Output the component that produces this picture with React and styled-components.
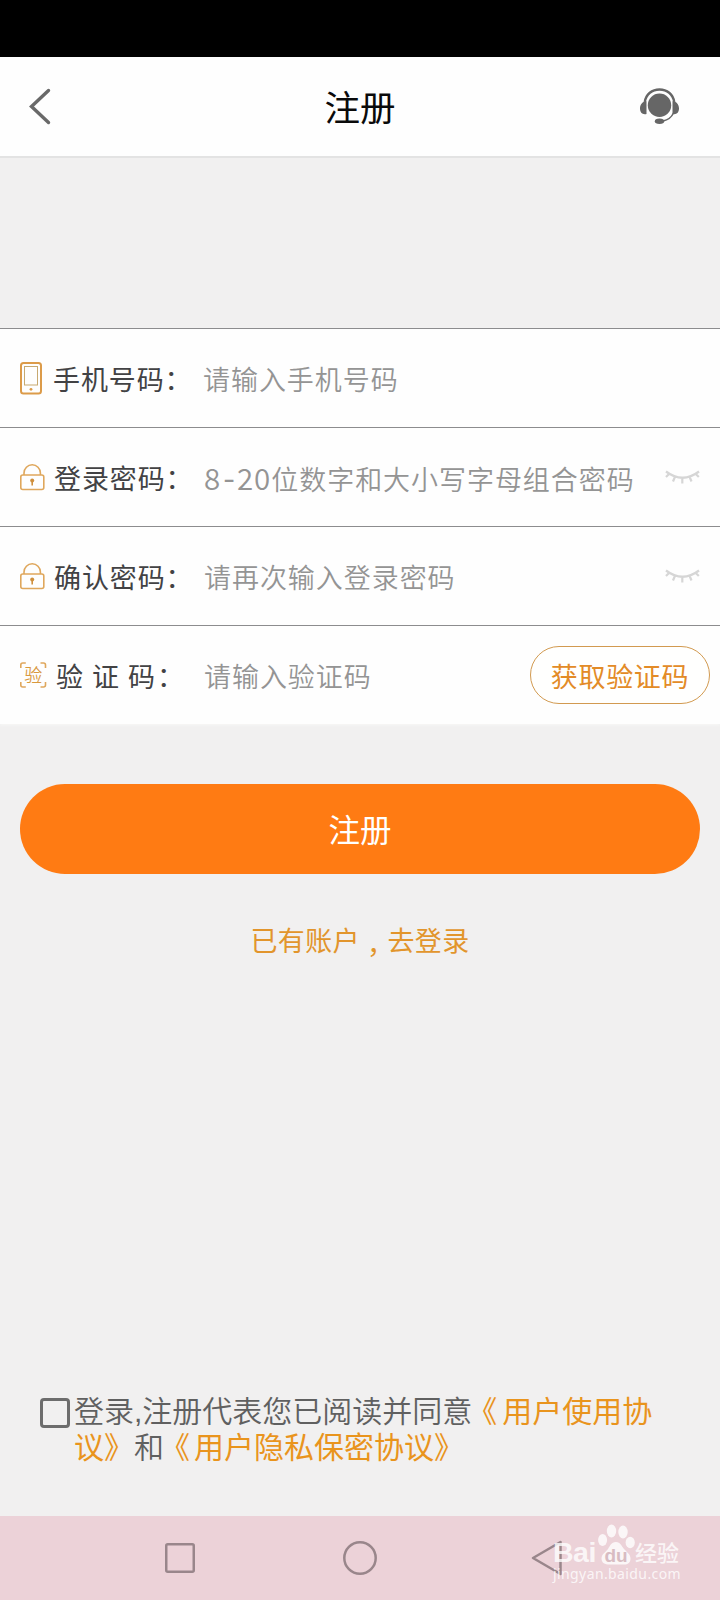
import React from "react";
import styled, { createGlobalStyle } from "styled-components";

const GlobalStyle = createGlobalStyle`
  *, *::before, *::after { box-sizing: border-box; }
  body {
    margin: 0;
    background: #f1f0f0;
    font-family: "Noto Sans CJK SC", "Noto Sans", sans-serif;
  }
`;

const Screen = styled.div`
  position: relative;
  display: flex;
  flex-direction: column;
  width: 720px;
  height: 1600px;
  overflow: hidden;
  background: #f1f0f0;
`;

const StatusBar = styled.div`
  flex: none;
  height: 57px;
  background: #000;
`;

const Header = styled.header`
  flex: none;
  display: grid;
  grid-template-columns: 80px 1fr 80px;
  align-items: center;
  height: 101px;
  border-bottom: 2px solid #e3e3e3;
  background: #fefefe;
`;

const BackButton = styled.div`
  display: flex;
  padding-left: 28px;
`;

const SupportButton = styled.div`
  display: flex;
`;

const Title = styled.h1`
  margin: 0;
  color: #0a0a0a;
  font-size: 35.5px;
  font-weight: 400;
  line-height: 50px;
  text-align: center;
  padding-bottom: 1px;
`;

const Form = styled.section`
  flex: none;
  display: flex;
  flex-direction: column;
  margin-top: 170px;
  background: #fefefe;
  box-shadow: 0 1px 3px #f8f8f7;
`;

const Row = styled.div`
  display: flex;
  align-items: center;
  height: 99px;
  padding: 0 10px 0 20px;
  border-top: 1px solid #8c8c8e;
`;

const IconSlot = styled.div`
  flex: none;
  display: flex;
  width: ${(p) => p.$width}px;
`;

const Label = styled.label`
  flex: none;
  width: ${(p) => p.$width}px;
  color: #424244;
  font-size: 27px;
  line-height: 40px;
  letter-spacing: ${(p) => p.$spacing || 0.9}px;
  white-space: nowrap;
  padding-top: 1px;
`;

const LastGlyph = styled.span`
  letter-spacing: 2px;
`;

const Hint = styled.div`
  flex: 1;
  display: flex;
  align-items: baseline;
  color: #949494;
  font-size: 27px;
  font-weight: 350;
  line-height: 40px;
  letter-spacing: 0.95px;
  white-space: nowrap;
  padding-top: 1px;
`;

const Digits = styled.span`
  display: flex;
  align-items: baseline;
  font-size: 29.5px;
  letter-spacing: 1px;
`;

const Dash = styled.span`
  padding: 0 1px 0 2px;
  font-size: 34px;
  line-height: 30px;
`;

const EyeSlot = styled.div`
  flex: none;
  display: flex;
  padding-right: 10px;
`;

const CodeButton = styled.button`
  flex: none;
  width: 180px;
  height: 58px;
  margin-bottom: 1px;
  padding: 2px 0 0;
  border: 1px solid #d29a50;
  border-radius: 29px;
  background: #fffffe;
  color: #e38b27;
  font-family: inherit;
  font-size: 27px;
  line-height: 40px;
  letter-spacing: 0.7px;
`;

const SubmitButton = styled.button`
  flex: none;
  height: 90px;
  margin: 60px 20px 0;
  padding: 0 0 2px;
  border: 0;
  border-radius: 45px;
  background: #ff7b13;
  color: #fff;
  font-family: inherit;
  font-size: 31.5px;
  line-height: 46px;
`;

const LoginLink = styled.a`
  flex: none;
  align-self: center;
  margin-top: 46px;
  color: #e2952c;
  font-size: 27px;
  line-height: 40px;
  letter-spacing: 0.4px;
`;

const LowComma = styled.span`
  position: relative;
  left: 7px;
  top: 3px;
`;

const Agreement = styled.div`
  flex: none;
  display: flex;
  align-items: flex-start;
  margin-top: auto;
  padding: 0 60px 51px 40px;
`;

const Checkbox = styled.span`
  flex: none;
  width: 30px;
  height: 30px;
  margin: 5px 4px 0 0;
  border: 3px solid #6d6d6d;
  border-radius: 4px;
`;

const AgreementText = styled.p`
  margin: 0;
  color: #606060;
  font-family: "Liberation Sans", "Noto Sans CJK SC", sans-serif;
  font-size: 30px;
  font-weight: 350;
  line-height: 35.5px;
  padding-top: 1px;
`;

const Terms = styled.span`
  color: #e9941d;
  font-weight: 400;
`;

const Kern = styled.span`
  letter-spacing: ${(p) => p.$by}px;
`;

const NavBar = styled.nav`
  flex: none;
  display: grid;
  grid-template-columns: repeat(3, 180px);
  justify-content: center;
  align-items: center;
  justify-items: center;
  height: 84px;
  background: #ecd2d8;
`;

const BackKey = styled.div`
  display: flex;
  padding-left: 14px;
`;

const Watermark = styled.div`
  position: absolute;
  left: 553px;
  top: 1521px;
  display: flex;
  flex-direction: column;
  color: rgba(255, 255, 255, 0.8);
`;

const Brand = styled.div`
  display: flex;
  align-items: flex-end;
  height: 44px;
`;

const BrandLatin = styled.span`
  width: 45px;
  font-family: "Liberation Sans", sans-serif;
  font-size: 28.5px;
  font-weight: 700;
  line-height: 25px;
  letter-spacing: -0.5px;
`;

const BrandHan = styled.span`
  margin-left: -1px;
  font-size: 22px;
  font-weight: 500;
  line-height: 28px;
`;

const BrandSite = styled.span`
  font-family: "Noto Sans", sans-serif;
  font-size: 14px;
  line-height: 18px;
  letter-spacing: 0.4px;
`;

const PhoneIcon = () => (
  <svg width="22" height="33" viewBox="0 0 22 33" fill="none" stroke="#dc9b49">
    <rect x="1" y="1" width="20" height="30.5" rx="2.5" strokeWidth="2" />
    <rect x="4.5" y="4.5" width="13" height="18.5" strokeWidth="1" stroke="#c7a970" />
    <circle cx="11" cy="27.3" r="1.4" fill="#dc9b49" stroke="none" />
  </svg>
);

const LockIcon = () => (
  <svg width="25" height="27" viewBox="0 0 25 27" fill="none" stroke="#dfa75c" strokeWidth="1.6">
    <rect x="0.8" y="11" width="23" height="14.5" rx="2" />
    <path d="M4 11V9a8.2 8.2 0 0 1 16.4 0v2" />
    <circle cx="12.2" cy="16.5" r="2" fill="#cf8f3d" stroke="none" />
    <path d="M12.2 16.5v5" stroke="#cf8f3d" />
  </svg>
);

const ScanIcon = () => (
  <svg width="27" height="27" viewBox="0 0 27 27" fill="none" stroke="#dfa75c" strokeWidth="1.6">
    <path d="M.8 6V3q0-2 2-2h3M20.5 1h3q2 0 2 2v3M25.5 20v3q0 2-2 2h-3M5.8 25h-3q-2 0-2-2v-3" />
    <text
      x="13.3"
      y="19.5"
      textAnchor="middle"
      fontFamily="Noto Sans CJK SC, sans-serif"
      fontSize="18"
      fontWeight="350"
      fill="#d9993e"
      stroke="none"
    >
      验
    </text>
  </svg>
);

const ClosedEyeIcon = () => (
  <svg width="35" height="17" viewBox="0 0 35 17" fill="none" stroke="#d6d6d6" strokeWidth="2.2">
    <path d="M1 2.5Q17.5 15 34 2.5M4 5L1 8M10 7.8L8 12.5M17.3 9v5.500M24.500 7.800l2 4.700M30.800 5l3 3" />
  </svg>
);

const HeadsetIcon = () => (
  <svg width="39" height="37" viewBox="0 0 39 37" fill="#666">
    <circle cx="19.5" cy="17.3" r="11.7" />
    <path d="M4.8 14C6 6 12 1.5 19.5 1.5S33 6 34.2 14" fill="none" stroke="#666" strokeWidth="2.4" />
    <path d="M6.500 13.200v12.800C2.500 27 0 24.500 0 20.500s2.500-7.300 6.500-7.300zM32.500 13.200v12.800c4 1 6.500-1.500 6.500-5.500s-2.500-7.300-6.500-7.300z" />
    <path d="M33.500 25q-3 6.500-10.500 8" fill="none" stroke="#666" strokeWidth="1.5" />
    <ellipse cx="19.5" cy="33.3" rx="4.7" ry="2.7" />
  </svg>
);

const PawIcon = () => (
  <svg width="38" height="43" viewBox="0 0 38 43" fill="rgba(255,255,255,.8)">
    <ellipse cx="4.6" cy="18" rx="4.5" ry="6" />
    <ellipse cx="13.5" cy="9" rx="4.7" ry="6.5" />
    <ellipse cx="25" cy="10" rx="4.7" ry="6.5" />
    <ellipse cx="32.2" cy="20.5" rx="4.6" ry="5.8" />
    <path d="M18 20c-5 0-6 4-8 7s-6.500 5-6.500 9.500 3.500 6 8 6h15c4 0 6-2.500 6-6 0-4.500-4-6.500-6.500-9.500s-3.500-7-8-7z" />
    <text
      x="18"
      y="39.5"
      textAnchor="middle"
      fontFamily="Liberation Sans, sans-serif"
      fontWeight="700"
      fontSize="19"
      fill="#d8bcc2"
    >
      du
    </text>
  </svg>
);

const fields = [
  { label: "手机号码", hint: "请输入手机号码", icon: <PhoneIcon />, slot: 33, width: 150 },
  { label: "登录密码", digits: true, hint: "位数字和大小写字母组合密码", icon: <LockIcon />, slot: 34, width: 150, eye: true },
  { label: "确认密码", hint: "请再次输入登录密码", icon: <LockIcon />, slot: 34, width: 150, eye: true },
  { label: "验证", last: "码", hint: "请输入验证码", icon: <ScanIcon />, slot: 36, width: 148, spacing: 9, code: true },
];

export default function App() {
  return (
    <>
      <GlobalStyle />
      <Screen>
        <StatusBar />
        <Header>
          <BackButton>
            <svg width="24" height="37" viewBox="0 0 24 37" fill="none" stroke="#696969" strokeWidth="3.4" strokeLinecap="round">
              <path d="M20.5 2.5L3.5 18.5l17 16" />
            </svg>
          </BackButton>
          <Title>注册</Title>
          <SupportButton>
            <HeadsetIcon />
          </SupportButton>
        </Header>
        <Form>
          {fields.map((f) => (
            <Row key={f.label}>
              <IconSlot $width={f.slot}>{f.icon}</IconSlot>
              <Label $width={f.width} $spacing={f.spacing}>
                {f.last ? (
                  <>
                    {f.label}
                    <LastGlyph>{f.last}：</LastGlyph>
                  </>
                ) : (
                  `${f.label}：`
                )}
              </Label>
              <Hint>
                {f.digits && (
                  <Digits>
                    8<Dash>-</Dash>20
                  </Digits>
                )}
                {f.hint}
              </Hint>
              {f.eye && (
                <EyeSlot>
                  <ClosedEyeIcon />
                </EyeSlot>
              )}
              {f.code && <CodeButton>获取验证码</CodeButton>}
            </Row>
          ))}
        </Form>
        <SubmitButton>注册</SubmitButton>
        <LoginLink>
          已有账户<LowComma>，</LowComma>去登录
        </LoginLink>
        <Agreement>
          <Checkbox />
          <AgreementText>
            登录,注册代表您已阅读并同<Kern $by={-5}>意</Kern>
            <Terms>
              <Kern $by={5}>《</Kern>用户使用协议》
            </Terms>
            <Kern $by={-4}>和</Kern>
            <Terms>
              <Kern $by={4}>《</Kern>用户隐私保密协议》
            </Terms>
          </AgreementText>
        </Agreement>
        <NavBar>
          <svg width="30" height="30" fill="none" stroke="#99868b" strokeWidth="2.5">
            <rect x="1.25" y="1.25" width="27.5" height="27.5" rx="1.5" />
          </svg>
          <svg width="34" height="34" fill="none" stroke="#99868b" strokeWidth="2.5">
            <circle cx="17" cy="17" r="15.7" />
          </svg>
          <BackKey>
            <svg width="32" height="36" viewBox="0 0 32 36" fill="none" stroke="#99868b" strokeWidth="2.5" strokeLinejoin="round">
              <path d="M2 18L29.5 2v32z" />
            </svg>
          </BackKey>
        </NavBar>
        <Watermark>
          <Brand>
            <BrandLatin>Bai</BrandLatin>
            <PawIcon />
            <BrandHan>经验</BrandHan>
          </Brand>
          <BrandSite>jingyan.baidu.com</BrandSite>
        </Watermark>
      </Screen>
    </>
  );
}
